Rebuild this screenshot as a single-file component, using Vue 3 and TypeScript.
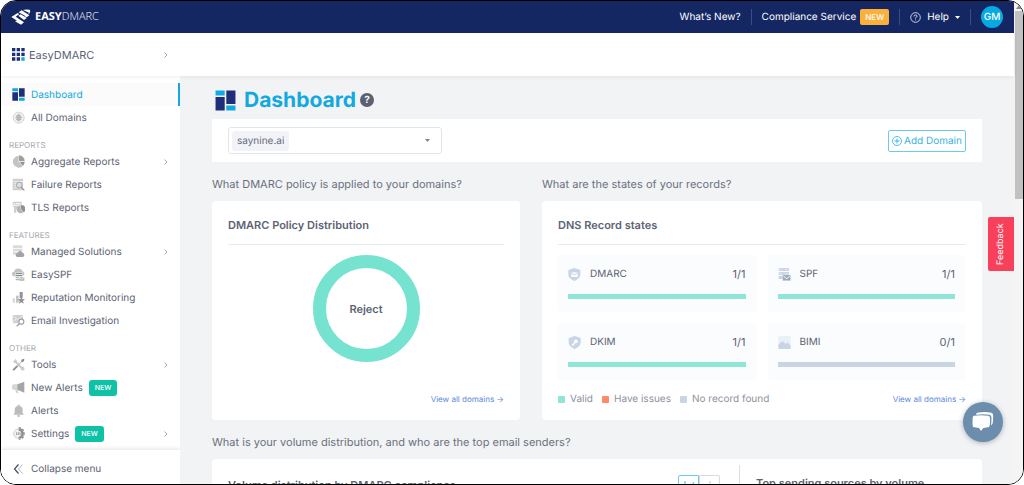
<script setup lang="ts">
import { ref } from 'vue'

interface NavItem {
  label: string
  icon: string
  arrow?: boolean
  isNew?: boolean
  active?: boolean
}

interface NavGroup {
  title?: string
  items: NavItem[]
}

interface RecordState {
  name: string
  icon: string
  valid: number
  total: number
}

const groups: NavGroup[] = [
  {
    items: [
      { label: 'Dashboard', icon: 'dashboard', active: true },
      { label: 'All Domains', icon: 'globe' },
    ],
  },
  {
    title: 'REPORTS',
    items: [
      { label: 'Aggregate Reports', icon: 'pie', arrow: true },
      { label: 'Failure Reports', icon: 'failure' },
      { label: 'TLS Reports', icon: 'tls' },
    ],
  },
  {
    title: 'FEATURES',
    items: [
      { label: 'Managed Solutions', icon: 'managed', arrow: true },
      { label: 'EasySPF', icon: 'easyspf' },
      { label: 'Reputation Monitoring', icon: 'reputation' },
      { label: 'Email Investigation', icon: 'email' },
    ],
  },
  {
    title: 'OTHER',
    items: [
      { label: 'Tools', icon: 'tools', arrow: true },
      { label: 'New Alerts', icon: 'megaphone', isNew: true },
      { label: 'Alerts', icon: 'bell' },
      { label: 'Settings', icon: 'gear', isNew: true, arrow: true },
    ],
  },
]

const records: RecordState[] = [
  { name: 'DMARC', icon: 'rec-dmarc', valid: 1, total: 1 },
  { name: 'SPF', icon: 'rec-spf', valid: 1, total: 1 },
  { name: 'DKIM', icon: 'rec-dkim', valid: 1, total: 1 },
  { name: 'BIMI', icon: 'rec-bimi', valid: 0, total: 1 },
]

const legend = [
  { label: 'Valid', tone: 'valid' },
  { label: 'Have issues', tone: 'issues' },
  { label: 'No record found', tone: 'missing' },
]

const domain = ref('saynine.ai')
</script>

<template>
  <svg class="sprite" aria-hidden="true">
    <symbol id="dashboard" viewBox="0 0 39 39">
      <path fill="#12a9e0" d="M1 1h17v9H1zM21 29h17v9H21z" />
      <path fill="#1d2f78" d="M1 13h17v25H1zM21 1h17v25H21z" />
    </symbol>
    <symbol id="globe" viewBox="0 0 39 39">
      <circle cx="20" cy="20" r="16.500" fill="#f1f1f1" stroke="#d2d2d2" stroke-width="3" />
      <path d="M20 10v20M10 20h20M12 15h16M12 25h16" stroke="#a2a2a2" stroke-width="2.200" fill="none" />
      <ellipse cx="20" cy="20" rx="5" ry="10" stroke="#a2a2a2" stroke-width="2" fill="none" />
    </symbol>
    <symbol id="pie" viewBox="0 0 39 39">
      <path fill="#c4c4c4" d="M20 2a18 18 0 1 0 13 31L20 20z" />
      <path fill="#a0a0a0" d="M21 1a17 17 0 0 1 17 17H21z" />
      <path fill="#939393" d="M22 20h16a17 17 0 0 1-5 12z" />
    </symbol>
    <symbol id="failure" viewBox="0 0 39 39">
      <path fill="#cfcfcf" d="M2 2h31v35H2z" />
      <path fill="#f3f3f3" d="M2 9h31v2H2zM6 15h8v2H6zM6 21h6v2H6zM6 27h7v2H6z" />
      <circle cx="22" cy="21" r="8.500" fill="#dedede" stroke="#aaa" stroke-width="3" />
      <path d="M28 28l9 9" stroke="#8c8c8c" stroke-width="3.500" />
    </symbol>
    <symbol id="tls" viewBox="0 0 39 39">
      <path fill="#cfcfcf" d="M2 2h27v9H2zM2 14h18v6l-7 3v12H6V18H2z" />
      <path fill="#fff" d="M5 6h4v2H5zM12 6h14v2H12z" />
      <path fill="#b5b5b5" d="M26 13a12 12 0 1 0 8 21l-8-9z" />
      <path fill="#909090" d="M27 12a12 12 0 0 1 8 22l-8-10z" />
    </symbol>
    <symbol id="managed" viewBox="0 0 39 39">
      <path fill="#dadada" d="M3 1h28v8H3zM3 11h28v8H3zM3 21h14v8H3z" />
      <path fill="#a3a3a3" d="M17 36a6 6 0 0 1 0-12 8 8 0 0 1 15-1 7 7 0 0 1 1 13z" />
    </symbol>
    <symbol id="easyspf" viewBox="0 0 39 39">
      <path fill="#c3c3c3" d="M8 25a7 7 0 0 1-2-14A14 14 0 0 1 32 10a8 8 0 0 1 0 15z" />
      <path fill="#fff" d="M10 13h21v25H10z" />
      <path fill="#8e8e8e" d="M11 14h19v5H11zM11 21h19v4H11z" />
      <path fill="#b2b2b2" d="M11 27h9v4h-9zM11 33h10v4H11zM22 28h15v10H22z" />
      <path d="M23 29l6 5 7-5" stroke="#fff" stroke-width="2" fill="none" />
    </symbol>
    <symbol id="reputation" viewBox="0 0 39 39">
      <path fill="#d7d7d7" d="M2 22h7v13H2z" />
      <path fill="#c3c3c3" d="M12 14h8v21h-8z" />
      <path fill="#929292" d="M23 3h9v18h-9zM28 17l3 7 8 1-6 5 2 8-7-4-7 4 2-8-6-5 8-1z" />
    </symbol>
    <symbol id="email" viewBox="0 0 39 39">
      <path fill="#cfcfcf" d="M2 3h31v12l-9 6-6 7H2z" />
      <path d="M3 5l14 12L32 5M3 26l9-11" stroke="#fff" stroke-width="2" fill="none" />
      <circle cx="28" cy="23" r="7.500" stroke="#a1a1a1" stroke-width="3.500" fill="#fff" />
      <path d="M22 29l-8 8" stroke="#a1a1a1" stroke-width="4" />
    </symbol>
    <symbol id="tools" viewBox="0 0 39 39">
      <path d="M9 9l23 24" stroke="#cbcbcb" stroke-width="6" stroke-linecap="round" />
      <path d="M3 9a7 7 0 0 0 10 5A7 7 0 0 0 9 3v6z" fill="#cbcbcb" />
      <circle cx="32" cy="32" r="5.500" fill="#cbcbcb" />
      <path d="M5 35L15 25" stroke="#919191" stroke-width="6" stroke-linecap="round" />
      <path d="M17 23L34 6" stroke="#b4b4b4" stroke-width="3" />
      <path d="M30 4l7-2-1 8-5 3-4-4z" fill="#8f8f8f" />
    </symbol>
    <symbol id="megaphone" viewBox="0 0 39 39">
      <path fill="#d5d5d5" d="M16 10H9a8 8 0 0 0-4 16l5 1 3 9h7l-3-9z" />
      <path fill="#a5a5a5" d="M16 10L37 2v33l-21-9z" />
    </symbol>
    <symbol id="bell" viewBox="0 0 39 39">
      <path fill="#bcbcbc" d="M17 2h6v4a12 12 0 0 1 9 12v9l4 5H4l4-5v-9a12 12 0 0 1 9-12zM15 34h10a5 5 0 0 1-10 0z" />
    </symbol>
    <symbol id="gear" viewBox="0 0 39 39">
      <path fill="#8c8c8c" d="M20 1h6l2 5 5-1 3 5-3 4 5 2v8l-5 2 3 5-4 4-5-2-2 5h-5z" />
      <circle cx="19" cy="20" r="14" stroke="#cfcfcf" stroke-width="3" fill="#f2f2f2" />
      <path d="M20 6a14 14 0 0 1 0 28z" fill="#8c8c8c" />
      <circle cx="19" cy="20" r="9" fill="#f2f2f2" />
      <path d="M14 16v8M19 16v8M24 16v8" stroke="#8c8c8c" stroke-width="2.500" />
    </symbol>
    <symbol id="rec-dmarc" viewBox="0 0 39 39">
      <path fill="#c9d4e5" d="M19 0l18 6v13c0 10-8 16-18 20C9 35 1 29 1 19V6z" />
      <path fill="#fff" d="M10 13h19v14H10z" />
      <path d="M10 14l9 7 10-7" stroke="#c9d4e5" stroke-width="3" fill="none" />
    </symbol>
    <symbol id="rec-dkim" viewBox="0 0 39 39">
      <path fill="#c9d4e5" d="M20 0l18 6v13c0 10-8 16-18 20C10 35 2 29 2 19V6z" />
      <circle cx="24" cy="16" r="5.500" fill="#fff" />
      <path d="M23 18L12 28M15 25l3 3" stroke="#fff" stroke-width="4" />
    </symbol>
    <symbol id="rec-spf" viewBox="0 0 39 39">
      <path fill="#c9d4e5" d="M2 0h31v9H2zM2 12h31v9H2zM2 24h13v9H2z" />
      <path d="M2 4h10M20 4h10M2 16h10M20 16h10" stroke="#e8eef6" stroke-width="2" />
      <path fill="#97a8be" stroke="#fbfcfe" d="M14 21h24v17H14z" />
      <path d="M17 25l9 7 9-7" stroke="#fff" stroke-width="3" fill="none" />
    </symbol>
    <symbol id="rec-bimi" viewBox="0 0 39 39">
      <rect x="1" y="0" width="37" height="39" rx="4" fill="#eaf0f7" />
      <path fill="#c9d4e5" d="M1 26l9-9q3-3 6 0l7 7 2-2q3-3 6 0l7 7v6q0 4-4 4H5q-4 0-4-4z" />
    </symbol>
    <symbol id="chevron" viewBox="0 0 6 8">
      <path d="M1.500 1.500L4 4L1.500 6.500" stroke="#a8a8a8" fill="none" />
    </symbol>
  </svg>

  <div class="window">
    <div class="app">
      <header class="topbar">
        <a class="brand" href="#">
          <svg width="20" height="16" viewBox="0 0 60 48" aria-hidden="true">
            <path fill="#fff" d="M1 24L20 12l5 3-11 8 25 17-9 7L17 40l-5-4 6-1z" />
            <path fill="#fff" d="M23 10l9-6 23 15-8 6-7-4 2-1z" />
            <path fill="#fff" d="M36 3q8-3 20-1 3 3 1 8-2 5-7 7l4-6z" />
            <path fill="#fff" d="M22 20l7-4 18 11-8 6z" />
          </svg>
          <span class="wordmark"><b>EASY</b>DMARC</span>
        </a>
        <nav class="toplinks" aria-label="Account">
          <a href="#">What’s New?</a>
          <i class="rule"></i>
          <a href="#" class="service">Compliance Service <span class="tag-new">NEW</span></a>
          <i class="rule"></i>
          <button type="button" class="help">
            <svg width="11" height="11" viewBox="0 0 11 11" aria-hidden="true">
              <circle cx="5.500" cy="5.500" r="4.800" fill="none" stroke="#dfe4f0" stroke-width="0.900" />
              <path d="M4 4.500q0-1.500 1.500-1.500T7 4.300q0 .8-1.500 1.500v.7M5.500 7.500v.9" fill="none" stroke="#dfe4f0" stroke-width="0.900" />
            </svg>
            Help
            <svg width="5" height="3" viewBox="0 0 5 3" aria-hidden="true"><path fill="#fff" d="M0 0h5L2.500 3z" /></svg>
          </button>
          <i class="rule"></i>
          <button type="button" class="avatar">GM</button>
        </nav>
      </header>

      <div class="account">
        <button type="button" class="switcher">
          <svg width="13" height="13" viewBox="0 0 39 39" aria-hidden="true">
            <path fill="#1d2f78" d="M0 0h10v10H0zM14 0h10v10H14zM28 0h10v10H28zM0 14h10v10H0zM14 14h10v10H14zM28 14h10v10H28zM0 28h10v10H0zM14 28h10v10H14z" />
            <path fill="#12a9e0" d="M28 28h10v10H28z" />
          </svg>
          <span>EasyDMARC</span>
          <svg class="arrow" width="6" height="8"><use href="#chevron" /></svg>
        </button>
      </div>

      <div class="body">
        <aside class="sidebar">
          <nav class="menu" aria-label="Main">
            <template v-for="(group, i) in groups" :key="i">
              <h2 v-if="group.title" class="menu-title">{{ group.title }}</h2>
              <a
                v-for="item in group.items"
                :key="item.label"
                href="#"
                class="menu-item"
                :class="{ active: item.active }"
              >
                <svg width="13" height="13" aria-hidden="true"><use :href="'#' + item.icon" /></svg>
                <span>{{ item.label }}</span>
                <em v-if="item.isNew" class="badge">NEW</em>
                <svg v-if="item.arrow" class="arrow" width="6" height="8" aria-hidden="true"><use href="#chevron" /></svg>
              </a>
            </template>
          </nav>
          <button type="button" class="collapse">
            <svg width="11" height="10" viewBox="0 0 11 10" aria-hidden="true">
              <path d="M5.500 .5L1.500 5l4 4.500" fill="none" stroke="#3f4c66" stroke-width="1.200" />
              <path d="M9.500 .5L5.500 5l4 4.500" fill="none" stroke="#b4b8c0" />
            </svg>
            Collapse menu
          </button>
        </aside>

        <main class="main">
          <div class="heading">
            <svg width="21" height="21" aria-hidden="true"><use href="#dashboard" /></svg>
            <h1>Dashboard</h1>
            <button type="button" class="hint" aria-label="About this page">?</button>
          </div>

          <div class="toolbar">
            <label class="picker">
              <select v-model="domain" aria-label="Domain">
                <option>saynine.ai</option>
              </select>
              <svg width="5" height="3" viewBox="0 0 5 3" aria-hidden="true"><path fill="#7d8595" d="M0 0h5L2.500 3z" /></svg>
            </label>
            <button type="button" class="add">
              <svg width="10" height="10" viewBox="0 0 10 10" aria-hidden="true">
                <circle cx="5" cy="5" r="4.500" fill="none" stroke="#3db8e6" stroke-width="0.900" />
                <path d="M5 2.500v5M2.500 5h5" stroke="#3db8e6" />
              </svg>
              Add Domain
            </button>
          </div>

          <div class="columns">
            <section class="policy">
              <p class="question">What DMARC policy is applied to your domains?</p>
              <div class="card">
                <h3>DMARC Policy Distribution</h3>
                <div class="donut"><span>Reject</span></div>
                <footer><a href="#" class="more">View all domains →</a></footer>
              </div>
            </section>

            <section class="states">
              <p class="question">What are the states of your records?</p>
              <div class="card">
                <h3>DNS Record states</h3>
                <div class="tiles">
                  <div v-for="rec in records" :key="rec.name" class="tile">
                    <div class="tile-row">
                      <svg width="13" height="13" aria-hidden="true"><use :href="'#' + rec.icon" /></svg>
                      <span>{{ rec.name }}</span>
                      <span class="count">{{ rec.valid }}/{{ rec.total }}</span>
                    </div>
                    <div class="track"><div class="fill" :style="{ width: (rec.valid / rec.total) * 100 + '%' }"></div></div>
                  </div>
                </div>
                <footer>
                  <ul class="legend">
                    <li v-for="entry in legend" :key="entry.label"><i :class="entry.tone"></i>{{ entry.label }}</li>
                  </ul>
                  <a href="#" class="more">View all domains →</a>
                </footer>
              </div>
            </section>
          </div>

          <p class="question">What is your volume distribution, and who are the top email senders?</p>
          <div class="card volume">
            <div class="volume-chart">
              <h4>Volume distribution by DMARC compliance</h4>
              <div class="toggle">
                <button type="button" class="on" aria-label="Line chart">
                  <svg width="12" height="10" viewBox="0 0 12 10"><path d="M2 1v8h9M5 7l2-3 2 1 2-3" fill="none" stroke="#3db8e6" /></svg>
                </button>
                <button type="button" aria-label="Bar chart">
                  <svg width="12" height="10" viewBox="0 0 12 10"><path d="M3 6v3M6 1v8M9 5v4" fill="none" stroke="#c5c9d0" /></svg>
                </button>
              </div>
            </div>
            <div class="sources"><h4>Top sending sources by volume</h4></div>
          </div>
        </main>
      </div>

      <button type="button" class="feedback">Feedback</button>
      <button type="button" class="chat" aria-label="Open chat">
        <svg width="22" height="20" viewBox="0 0 66 60" aria-hidden="true">
          <path fill="#fff" d="M16 2q22-4 42 0 5 1 5 6 1 14-1 26-1 5-5 6 2-14 1-26-1-5-6-6-18-2-40 0 0-5 4-6z" />
          <path fill="#fff" d="M6 11q22-3 43 0 5 1 5 6 1 11-1 24-1 5-5 5l-14 2-7 9-6-9-14-2q-4 0-5-5-1-12 0-24 0-5 4-6z" />
        </svg>
      </button>
    </div>

    <div class="scrollbar" aria-hidden="true">
      <svg width="8" height="10" viewBox="0 0 8 10"><path fill="#8a8a8a" d="M4 4l3 4H1z" /></svg>
      <div class="thumb"></div>
    </div>
  </div>
</template>

<style>
html,
body {
  background: #fff;
  overflow: hidden;
}
</style>

<style scoped>
* {
  box-sizing: border-box;
}
.sprite {
  position: absolute;
  width: 0;
  height: 0;
}
a {
  color: inherit;
  text-decoration: none;
}
button {
  padding: 0;
  border: 0;
  background: none;
  color: inherit;
  font: inherit;
  text-rendering: inherit;
  cursor: pointer;
}
h1,
h2,
h3,
h4,
p,
ul {
  margin: 0;
  padding: 0;
}
svg {
  flex: none;
}
.window {
  display: flex;
  height: 100vh;
  overflow: hidden;
  border: 1px solid #000;
  border-radius: 16px;
  background: #fafafa;
  color: #5d6373;
  font: 10px/16px Inter, "Liberation Sans", sans-serif;
  text-rendering: geometricPrecision;
}
.app {
  position: relative;
  display: flex;
  flex: 1;
  flex-direction: column;
  min-width: 0;
}
.topbar {
  display: flex;
  flex: none;
  align-items: center;
  justify-content: space-between;
  height: 32px;
  padding: 0 11px 0 10px;
  background: #152763;
  color: #fff;
}
.brand {
  display: flex;
  align-items: center;
  gap: 4px;
}
.wordmark {
  font: 300 11px/16px "Open Sans", sans-serif;
}
.wordmark b {
  font-weight: 700;
}
.toplinks {
  display: flex;
  align-items: center;
  gap: 10px;
}
.rule {
  width: 1px;
  height: 16px;
  background: #3d4d80;
}
.service {
  display: flex;
  align-items: center;
  gap: 4px;
}
.tag-new {
  padding: 0 5px;
  border-radius: 2px;
  background: #fbb03b;
  font-size: 8px;
  font-weight: 500;
}
.help {
  display: flex;
  align-items: center;
  gap: 6px;
}
.avatar {
  width: 22px;
  height: 22px;
  border-radius: 50%;
  background: #06a9e2;
  font-weight: 500;
}
.account {
  position: relative;
  flex: none;
  height: 43px;
  background: #fff;
  box-shadow: 0 1px 4px rgba(40, 50, 70, 0.08);
}
.switcher {
  display: flex;
  align-items: center;
  gap: 4px;
  width: 179px;
  height: 100%;
  padding: 0 11px;
  font-size: 11px;
}
.arrow {
  margin-left: auto;
}
.body {
  display: flex;
  flex: 1;
  min-height: 0;
}
.sidebar {
  display: flex;
  flex: none;
  flex-direction: column;
  width: 179px;
  background: #fff;
}
.menu {
  flex: 1;
  min-height: 0;
  padding-top: 7px;
  overflow: hidden;
}
.menu-item {
  display: flex;
  align-items: center;
  gap: 6px;
  height: 23px;
  padding: 0 11px;
}
.menu-item.active {
  border-right: 2px solid #12a9e0;
  background: #fbfbfb;
  color: #12a9e0;
}
.menu-title {
  height: 21px;
  padding: 8px 0 0 8px;
  color: #a5a8ae;
  font-size: 8px;
  font-weight: 400;
  line-height: 16px;
}
.badge {
  padding: 0 6px;
  border-radius: 3px;
  background: #10c2a5;
  color: #fff;
  font-size: 7px;
  font-style: normal;
  font-weight: 500;
}
.collapse {
  display: flex;
  flex: none;
  align-items: center;
  gap: 7px;
  height: 34px;
  padding: 3px 12px 0;
  background: #fff;
  box-shadow: 0 0 5px rgba(40, 50, 70, 0.2);
}
.main {
  flex: 1;
  min-width: 0;
  padding: 12px 32px 0;
  overflow: hidden;
  background: #f2f3f5;
}
.heading {
  display: flex;
  align-items: center;
  height: 24px;
  margin-bottom: 7px;
  padding-left: 3px;
}
.heading h1 {
  padding-top: 2px;
  margin: 0 4px 0 8px;
  color: #12a9e0;
  font-size: 21px;
  font-weight: 700;
  line-height: 24px;
}
.hint {
  width: 14px;
  height: 14px;
  border-radius: 50%;
  background: #5d6073;
  color: #fff;
  font-weight: 700;
  line-height: 14px;
}
.toolbar {
  display: flex;
  align-items: center;
  justify-content: space-between;
  padding: 8px 16px;
  background: #fff;
}
.picker {
  display: flex;
  align-items: center;
  justify-content: space-between;
  width: 214px;
  height: 27px;
  padding: 0 11px 0 3px;
  border: 1px solid #e3e5ea;
  border-radius: 3px;
}
.picker select {
  height: 20px;
  padding: 0 5px;
  border: 0;
  border-radius: 3px;
  appearance: none;
  background: #f2f3f8;
  color: #686e7c;
  font: inherit;
  text-rendering: inherit;
  field-sizing: content;
}
.add {
  display: flex;
  align-items: center;
  justify-content: center;
  gap: 2px;
  width: 78px;
  height: 22px;
  border: 1px solid #6ecbec;
  border-radius: 2px;
  color: #38b2e2;
}
.question {
  padding: 14px 0 9px;
  color: #6a7080;
  font-size: 11px;
}
.columns {
  display: grid;
  grid-template-columns: repeat(12, minmax(0, 1fr));
  gap: 22px;
}
.policy,
.states {
  display: flex;
  flex-direction: column;
}
.policy {
  grid-column: span 5;
}
.states {
  grid-column: span 7;
}
.card {
  display: flex;
  flex: 1;
  flex-direction: column;
  padding: 0 16px 13px;
  border-radius: 4px;
  background: #fff;
}
.card h3,
.card h4 {
  font-size: 11px;
  font-weight: 600;
  line-height: 20px;
}
.card h3 {
  padding: 14px 0 9px;
  border-bottom: 1px solid #e9eaed;
}
.donut {
  display: flex;
  align-items: center;
  justify-content: center;
  align-self: center;
  width: 107px;
  height: 107px;
  margin-top: 10px;
  border: 13px solid #75e3cf;
  border-radius: 50%;
  font-size: 11px;
  font-weight: 600;
}
.card footer {
  display: flex;
  align-items: center;
  justify-content: space-between;
  margin-top: auto;
}
.more {
  margin-left: auto;
  color: #5c87dc;
  font-size: 8px;
}
.tiles {
  display: grid;
  grid-template-columns: 1fr 1fr;
  gap: 11px;
  margin: 10px 0 11px;
}
.tile {
  padding: 11px 11px 13px 10px;
  border-radius: 3px;
  background: #fafcfe;
}
.tile-row {
  display: flex;
  align-items: center;
  gap: 9px;
  margin-bottom: 12px;
}
.count {
  margin-left: auto;
  font-size: 11px;
}
.track {
  height: 5px;
  background: #c9d4e5;
}
.fill {
  height: 100%;
  background: #8fe6d6;
}
.legend {
  display: flex;
  gap: 9px;
  color: #8d929d;
  list-style: none;
}
.legend li {
  display: flex;
  align-items: center;
  gap: 5px;
}
.legend i {
  width: 7px;
  height: 7px;
  border-radius: 1px;
}
.valid {
  background: #8fe6d6;
}
.issues {
  background: #ff8a68;
}
.missing {
  background: #c9d4e5;
}
.volume {
  flex-direction: row;
  align-items: stretch;
  padding: 6px 16px 0;
  min-height: 200px;
}
.volume-chart {
  display: flex;
  flex: 1;
  align-items: flex-start;
  justify-content: space-between;
  padding: 10px 19px 0 0;
}
.sources {
  flex: 0 0 227px;
  padding: 8px 0 0 16px;
  border-left: 1px solid #dcdee2;
}
.toggle {
  display: flex;
}
.toggle button {
  display: flex;
  align-items: center;
  justify-content: center;
  width: 21px;
  height: 20px;
  border: 1px solid #d8dbe0;
  border-radius: 0 2px 2px 0;
}
.toggle .on {
  border-color: #6ecbec;
  border-radius: 2px 0 0 2px;
}
.feedback {
  position: absolute;
  top: 216px;
  right: 0;
  width: 26px;
  height: 54px;
  border-radius: 0 2px 2px 0;
  background: #f8405a;
  color: #fff;
  font-size: 9px;
  writing-mode: vertical-rl;
  transform: rotate(180deg);
}
.chat {
  position: absolute;
  right: 11px;
  bottom: 42px;
  display: flex;
  align-items: center;
  justify-content: center;
  width: 40px;
  height: 40px;
  border-radius: 50%;
  background: #6d8dad;
  box-shadow: 0 1px 5px rgba(40, 50, 70, 0.35);
}
.scrollbar {
  display: flex;
  flex: none;
  flex-direction: column;
  width: 9px;
  padding-left: 1px;
  background: #f4f4f5;
}
.thumb {
  height: 39%;
  background: #c1c1c1;
}
</style>
